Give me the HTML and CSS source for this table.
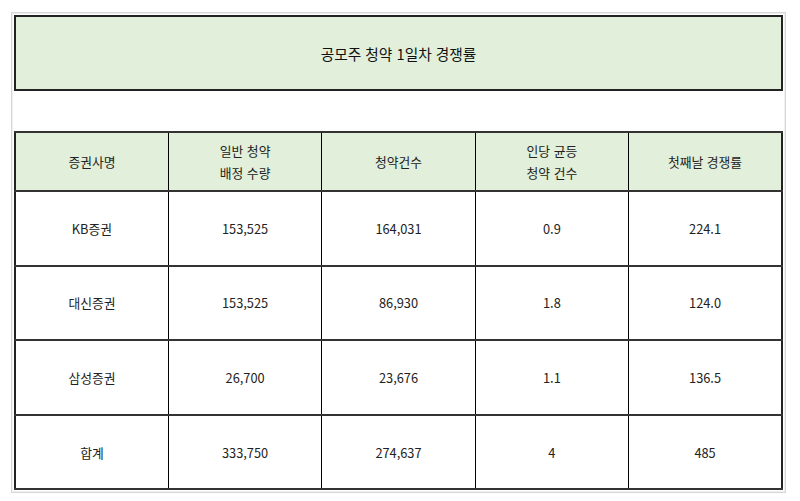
FILE: index.html
```html
<!DOCTYPE html>
<html lang="ko">
<head>
<meta charset="utf-8">
<link rel="stylesheet" href="styles.css">
</head>
<body>
<div class="frame">
  <div class="title">공모주 청약 1일차 경쟁률</div>
  <div class="spacer"></div>
  <table class="grid">
    <tr class="head">
      <td>증권사명</td>
      <td>일반 청약<br>배정 수량</td>
      <td>청약건수</td>
      <td>인당 균등<br>청약 건수</td>
      <td>첫째날 경쟁률</td>
    </tr>
    <tr><td>KB증권</td><td>153,525</td><td>164,031</td><td>0.9</td><td>224.1</td></tr>
    <tr><td>대신증권</td><td>153,525</td><td>86,930</td><td>1.8</td><td>124.0</td></tr>
    <tr><td>삼성증권</td><td>26,700</td><td>23,676</td><td>1.1</td><td>136.5</td></tr>
    <tr><td>합계</td><td>333,750</td><td>274,637</td><td>4</td><td>485</td></tr>
  </table>
</div>
</body>
</html>
```
FILE: styles.css
```css
html, body {
  margin: 0;
  padding: 0;
  background: #fff;
}
body {
  font-family: "Noto Sans CJK KR", "Noto Sans", sans-serif;
  color: #222;
}
.frame {
  margin: 12px 0 0 11px;
  width: 775px;
  border: 1px solid #d6d6d6;
  box-shadow: inset 0 0 0 1px #f0f0f0;
  padding: 2px;
  box-sizing: border-box;
}
.title {
  height: 76px;
  box-sizing: border-box;
  border: 2px solid #222;
  background: #e2efda;
  display: flex;
  align-items: center;
  justify-content: center;
  font-size: 14.7px;
  color: #111;
}
.spacer {
  height: 40px;
}
.grid {
  width: 769px;
  border-collapse: collapse;
  table-layout: fixed;
  border: 2px solid #222;
}
.grid td {
  border-left: 1px solid #000;
  border-right: 1px solid #000;
  border-top: 2px solid #333;
  border-bottom: 2px solid #333;
  text-align: center;
  vertical-align: middle;
  font-size: 12.8px;
  height: 72.6px;
  padding: 0;
  color: #222;
}
.grid .head td {
  background: #e2efda;
  height: 57px;
  line-height: 22px;
}
```
